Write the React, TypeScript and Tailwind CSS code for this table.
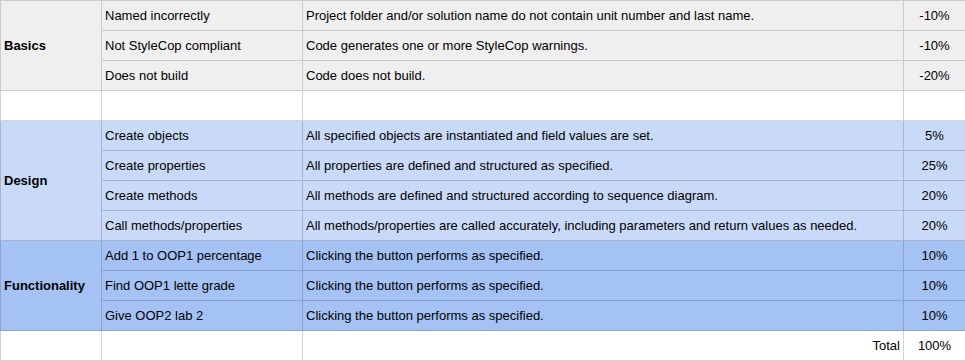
const sections = [
  {
    name: "Basics",
    bg: "bg-[#efefef]",
    line: "border-[#cbcbcb]",
    rows: [
      ["Named incorrectly", "Project folder and/or solution name do not contain unit number and last name.", "-10%"],
      ["Not StyleCop compliant", "Code generates one or more StyleCop warnings.", "-10%"],
      ["Does not build", "Code does not build.", "-20%"],
    ],
  },
  {
    name: "Design",
    bg: "bg-[#c9daf8]",
    line: "border-[#a4b4d4]",
    rows: [
      ["Create objects", "All specified objects are instantiated and field values are set.", "5%"],
      ["Create properties", "All properties are defined and structured as specified.", "25%"],
      ["Create methods", "All methods are defined and structured according to sequence diagram.", "20%"],
      ["Call methods/properties", "All methods/properties are called accurately, including parameters and return values as needed.", "20%"],
    ],
  },
  {
    name: "Functionality",
    bg: "bg-[#a4c2f4]",
    line: "border-[#88a2cf]",
    rows: [
      ["Add 1 to OOP1 percentage", "Clicking the button performs as specified.", "10%"],
      ["Find OOP1 lette grade", "Clicking the button performs as specified.", "10%"],
      ["Give OOP2 lab 2", "Clicking the button performs as specified.", "10%"],
    ],
  },
];

const cell = "border h-[30px] px-[3px] align-middle whitespace-nowrap overflow-hidden";

export default function App() {
  return (
    <div className="w-[965px] h-[361px] bg-white font-['Liberation_Sans',Arial,sans-serif] text-[13px] text-black">
      <table className="table-fixed border-collapse w-[965px]">
        <colgroup>
          <col className="w-[101px]" />
          <col className="w-[201px]" />
          <col className="w-[601px]" />
          <col className="w-[62px]" />
        </colgroup>
        <tbody>
          {sections.map((s, si) => (
            <>
              {s.rows.map((r, i) => (
                <tr key={s.name + i} className={s.bg}>
                  {i === 0 && (
                    <td rowSpan={s.rows.length} className={`${cell} ${s.line} font-bold`}>
                      {s.name}
                    </td>
                  )}
                  <td className={`${cell} ${s.line}`}>{r[0]}</td>
                  <td className={`${cell} ${s.line}`}>{r[1]}</td>
                  <td className={`${cell} ${s.line} text-center`}>{r[2]}</td>
                </tr>
              ))}
              {si === 0 && (
                <tr key="blank" className="bg-white">
                  <td className={`${cell} border-[#d4d4d4]`}></td>
                  <td className={`${cell} border-[#d4d4d4]`}></td>
                  <td className={`${cell} border-[#d4d4d4]`}></td>
                  <td className={`${cell} border-[#d4d4d4]`}></td>
                </tr>
              )}
            </>
          ))}
          <tr className="bg-white">
            <td className={`${cell} border-[#d4d4d4]`}></td>
            <td className={`${cell} border-[#d4d4d4]`}></td>
            <td className={`${cell} border-[#d4d4d4] text-right`}>Total</td>
            <td className={`${cell} border-[#d4d4d4] text-center`}>100%</td>
          </tr>
        </tbody>
      </table>
    </div>
  );
}
